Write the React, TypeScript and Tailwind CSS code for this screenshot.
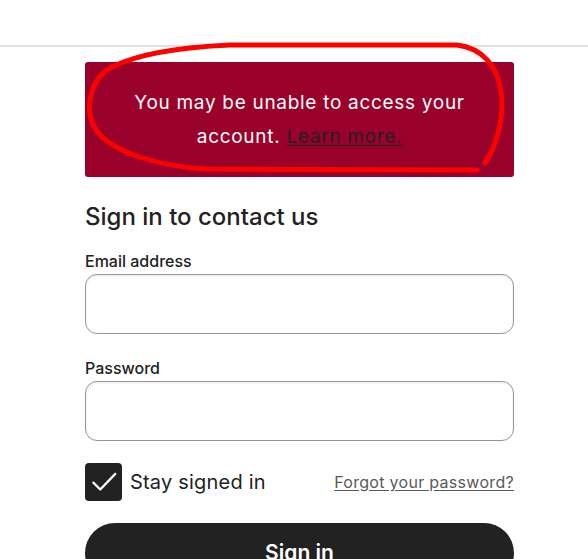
export default function App() {
  return (
    <div className="relative w-[588px] h-[559px] overflow-hidden bg-white text-[#222222]" style={{ fontFamily: "Inter, 'Open Sans', sans-serif" }}>
      <div className="h-[47px] border-b-2 border-[#e1e1e1]" />

      <div className="pl-[85px] w-[514px]">
        <div className="mt-[15px] h-[115px] rounded-[3px] bg-[#99002a] flex items-center justify-center text-center text-[19px] tracking-[0.7px] leading-[34px] text-white">
          <p className="w-[350px]">
            You may be unable to access your account.{" "}
            <a href="#" className="text-[#222222] underline underline-offset-2">Learn more.</a>
          </p>
        </div>

        <h2 className="mt-[25px] text-[24px] leading-[30px] font-medium">Sign in to contact us</h2>

        <form className="mt-[20px]">
          <label className="block text-[16px] leading-[18px] font-medium" htmlFor="email">Email address</label>
          <input id="email" className="mt-[4px] block w-full h-[60px] rounded-[12px] border border-[#959595] bg-white px-3 shadow-[inset_0_1px_3px_rgba(0,0,0,0.08)]" />

          <label className="mt-[25px] block text-[16px] leading-[18px] font-medium" htmlFor="password">Password</label>
          <input id="password" type="password" className="mt-[4px] block w-full h-[60px] rounded-[12px] border border-[#959595] bg-white px-3 shadow-[inset_0_1px_3px_rgba(0,0,0,0.08)]" />

          <div className="mt-[22px] flex items-center justify-between">
            <label className="flex items-center gap-[8px]">
              <span className="flex w-[37px] h-[38px] items-center justify-center rounded-[4px] bg-[#222222]">
                <svg width="30" height="30" viewBox="0 0 24 24" fill="none" stroke="white" strokeWidth="1.8" strokeLinecap="round" strokeLinejoin="round">
                  <path d="M3.5 12.5l5.5 5.5L21 5.5" />
                </svg>
              </span>
              <span className="text-[20px] leading-[24px] tracking-[0.2px]">Stay signed in</span>
            </label>
            <a href="#" className="text-[16px] tracking-[0.3px] text-[#595959] underline underline-offset-2">Forgot your password?</a>
          </div>

          <button type="button" className="mt-[22px] w-full h-[60px] rounded-full bg-[#222222] text-white text-[21px] font-semibold">
            Sign in
          </button>
        </form>
      </div>

      <svg className="absolute left-0 top-0 pointer-events-none" width="588" height="559" viewBox="0 0 588 559" fill="none" stroke="#ff0000" strokeWidth="5" strokeLinecap="round" strokeLinejoin="round">
        <path d="M485 163 C495 148 505 120 501 92 C498 66 482 48 457 45 L230 45 C185 47 140 53 112 67 C88 80 85 112 95 128 C110 153 160 166 205 169 L477 170" />
      </svg>
    </div>
  )
}
